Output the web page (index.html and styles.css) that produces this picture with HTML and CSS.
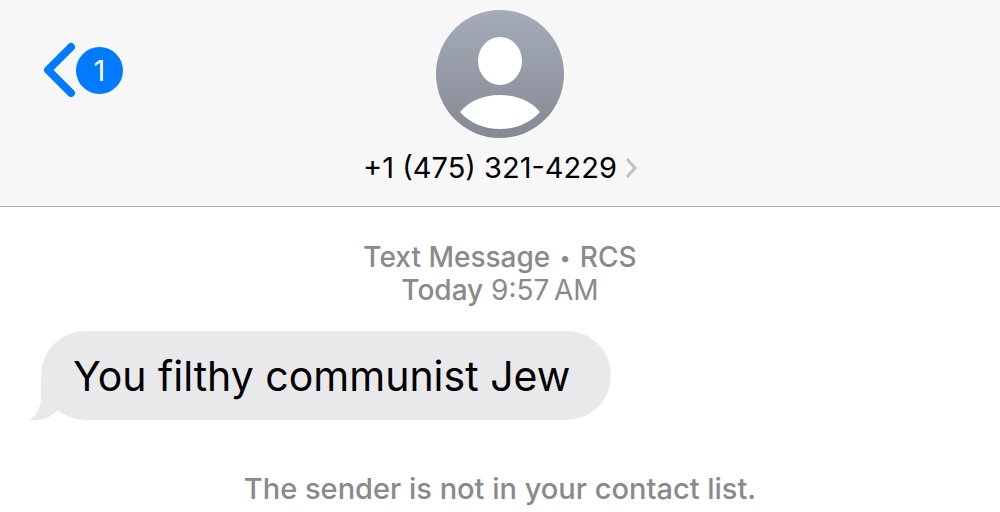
FILE: index.html
```html
<!DOCTYPE html>
<html lang="en">
<head>
<meta charset="utf-8">
<title>Messages</title>
<link rel="stylesheet" href="styles.css">
</head>
<body>
<header class="header">
  <button class="back" type="button" aria-label="Back, 1 unread">
    <svg class="back-icon" viewBox="0 0 34 56" aria-hidden="true"><path d="M29 5 6 28l23 23"/></svg>
    <span class="badge">1</span>
  </button>
  <button class="contact" type="button">
    <svg class="avatar" viewBox="0 0 128 128" aria-hidden="true">
      <defs>
        <linearGradient id="shade" x1="0" y1="0" x2="0" y2="1"><stop offset="0" stop-color="#a5abb9"/><stop offset="1" stop-color="#858993"/></linearGradient>
      </defs>
      <circle cx="64" cy="64" r="64" fill="url(#shade)"/>
      <ellipse cx="64" cy="51" rx="22" ry="24" fill="#fff"/>
      <path d="M24 102C32 92 46 85 64 85s32 7 40 17c-10 11-24 17-40 17s-30-6-40-17Z" fill="#fff"/>
    </svg>
    <span class="number">+1 (475) 321-4229
      <svg class="chevron" viewBox="0 0 12 20" aria-hidden="true"><path d="m2 1 8 9-8 9"/></svg>
    </span>
  </button>
</header>
<main class="thread">
  <p class="meta"><strong>Text Message <span class="dot">•</span> RCS</strong><br><strong>Today</strong> 9:57&#8198;AM</p>
  <div class="bubble">You filthy communist Jew
    <svg class="tail" viewBox="0 0 34 40" aria-hidden="true"><path d="M13 0v18C12 28 8 36 0 39c11 1 21-1 29-9l5-10V0Z"/></svg>
  </div>
  <p class="notice">The sender is not in your contact list.</p>
</main>
</body>
</html>
```

FILE: styles.css
```css
* { box-sizing: border-box; }
body { margin: 0; background: #fff; color: #000; font-family: Inter, "Liberation Sans", sans-serif; }
button { padding: 0; border: 0; background: none; color: inherit; font: inherit; }
.header { display: grid; grid-template-columns: 1fr auto 1fr; align-items: start; padding: 10px 42px 20px; background: #f7f7f7; border-bottom: 1px solid #b3b3b3; }
.back { display: flex; align-items: center; justify-self: start; margin-top: 32px; }
.back-icon { width: 34px; height: 56px; fill: none; stroke: #007aff; stroke-width: 8; stroke-linecap: round; stroke-linejoin: round; }
.badge { width: 47px; height: 47px; border-radius: 50%; background: #007aff; color: #fff; font-size: 29px; line-height: 47px; }
.contact { display: flex; flex-direction: column; align-items: center; gap: 12px; }
.avatar { width: 128px; height: 128px; }
.number { display: flex; align-items: center; gap: 8px; font-size: 29px; line-height: 36px; }
.chevron { width: 12px; height: 20px; fill: none; stroke: #c2c2c5; stroke-width: 3; stroke-linejoin: miter; }
.thread { padding: 34px 41px 0; }
.meta { margin: 0 0 24px; color: #8a8a8c; font-size: 28px; line-height: 33px; text-align: center; }
.meta strong { font-weight: 500; }
.dot { margin: 0 2px; font-size: 20px; line-height: 20px; vertical-align: 2px; }
.bubble { position: relative; width: fit-content; padding: 21px 41px 19px 32px; border-radius: 45px; background: #e9e9eb; font-size: 41px; line-height: 49px; }
.tail { position: absolute; left: -13px; bottom: -1px; width: 34px; height: 40px; fill: #e9e9eb; }
.notice { margin: 52px 0 0; color: #8a8a8c; font-size: 29px; font-weight: 500; line-height: 33px; text-align: center; }
```
